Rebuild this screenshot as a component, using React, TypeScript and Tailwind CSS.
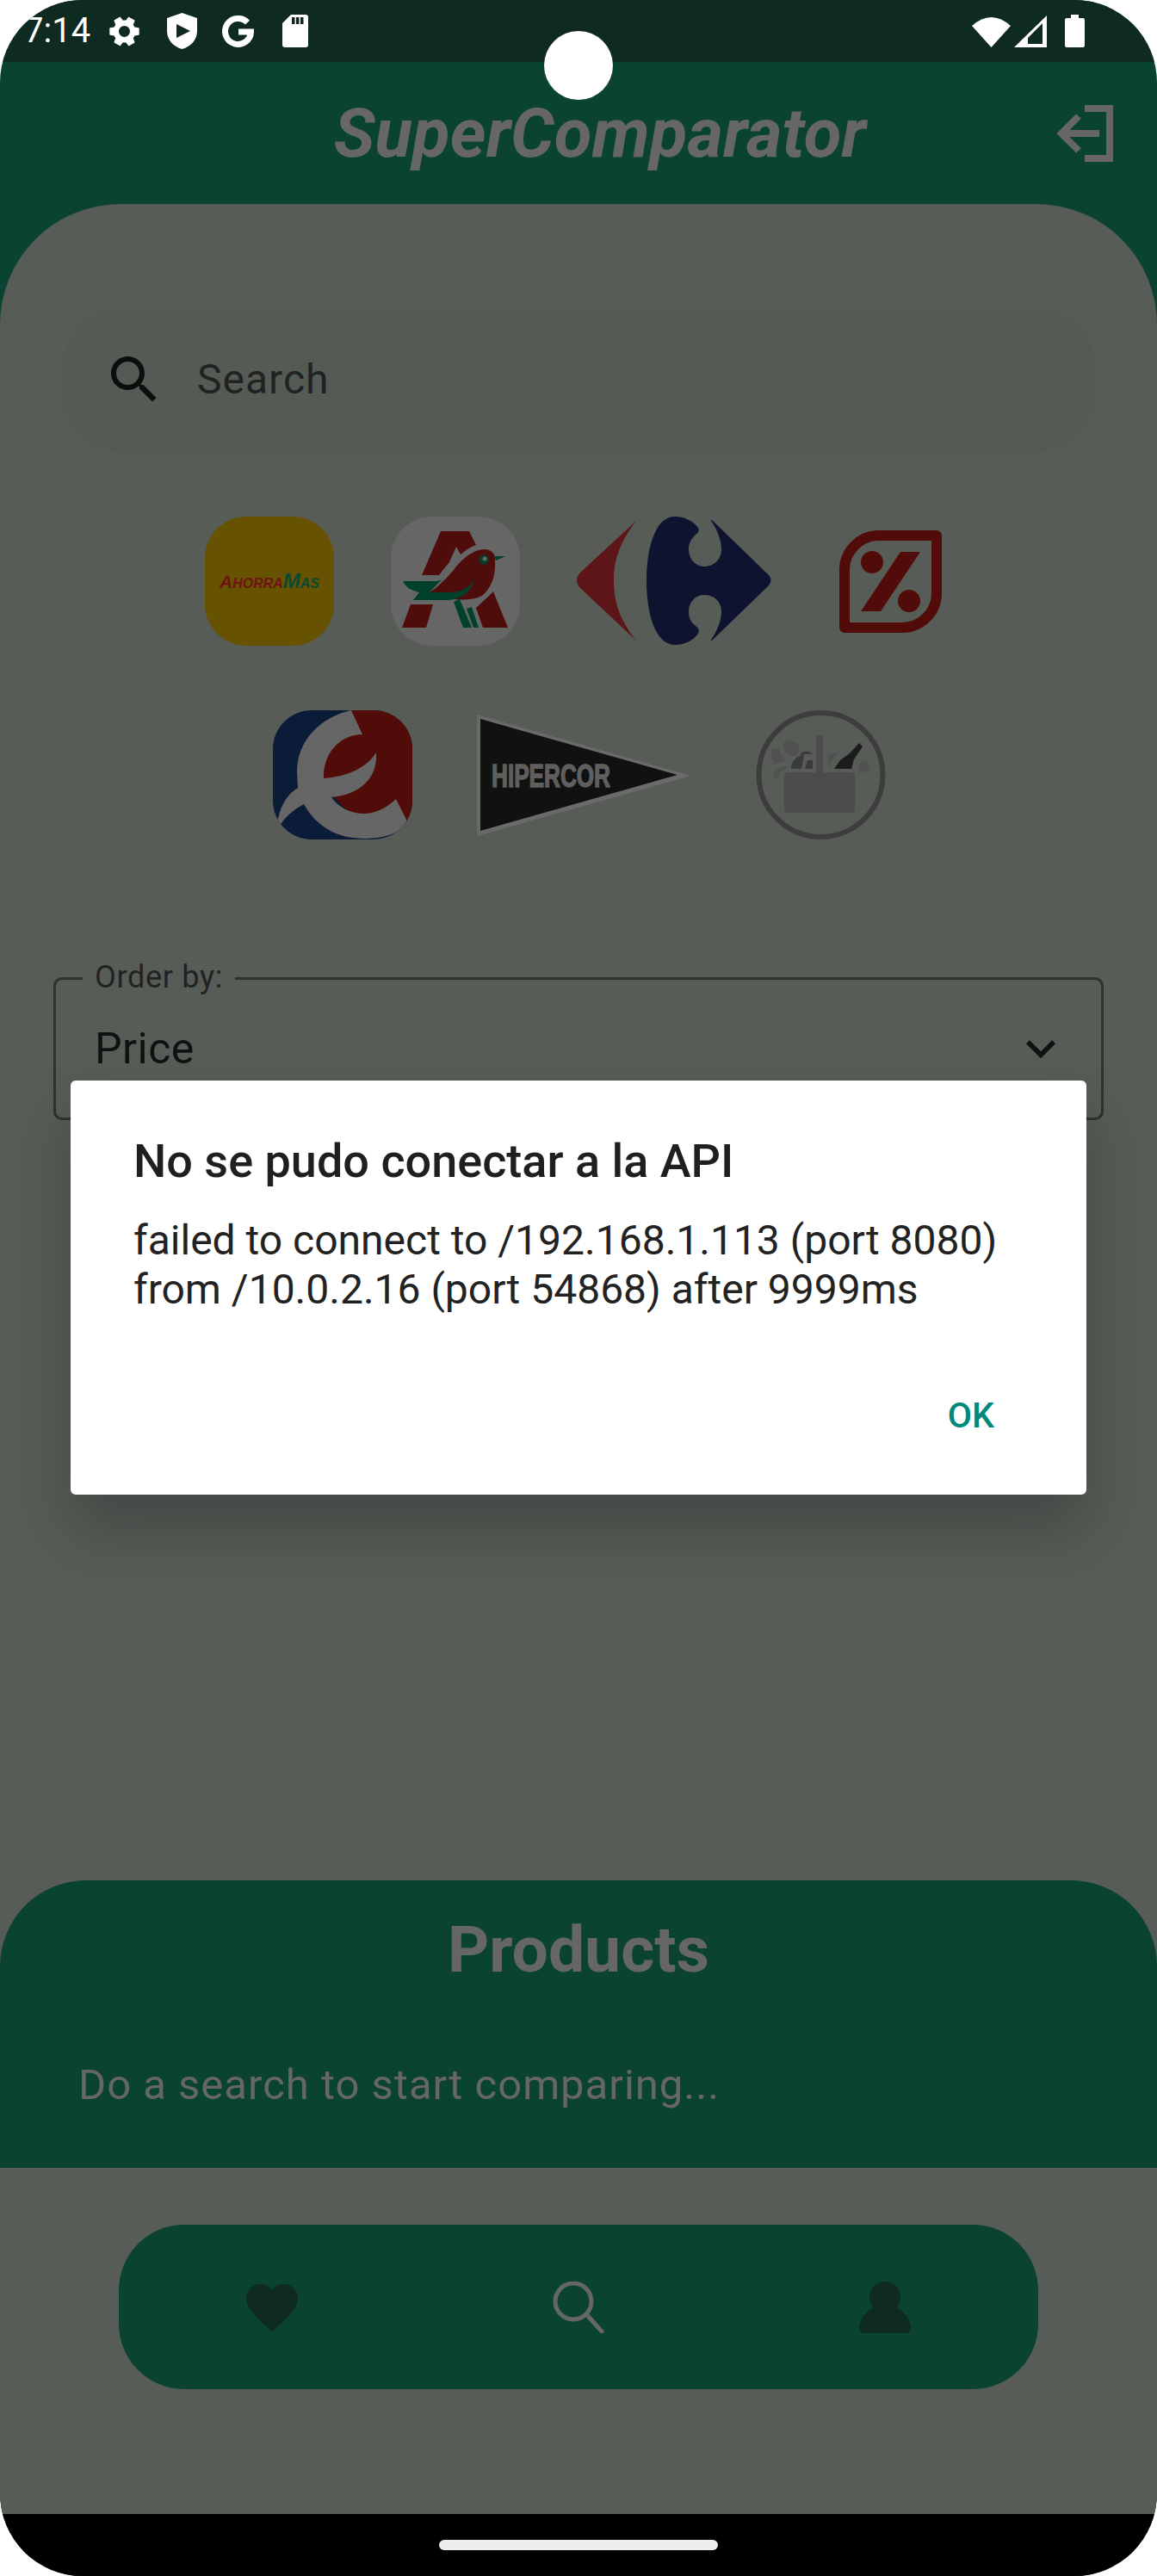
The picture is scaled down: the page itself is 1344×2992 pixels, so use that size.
const font = "font-['Roboto',sans-serif]";

const StatusIcons = () => (
  <div className="flex h-[72px] shrink-0 items-center bg-[#0f2a20] text-white">
    <span className={`ml-[28px] w-[78px] text-[40px] leading-none ${font}`}>7:14</span>
    <svg viewBox="0 0 24 24" className="ml-[17px] h-[43px] w-[43px] rotate-90" fill="white">
      <path d="M19.14 12.94c.04-.3.06-.61.06-.94 0-.32-.02-.64-.07-.94l2.03-1.58c.18-.14.23-.41.12-.61l-1.92-3.32c-.12-.22-.37-.29-.59-.22l-2.39.96c-.5-.38-1.03-.7-1.62-.94l-.36-2.54c-.04-.24-.24-.41-.48-.41h-3.84c-.24 0-.43.17-.47.41l-.36 2.54c-.59.24-1.13.57-1.62.94l-2.39-.96c-.22-.08-.47 0-.59.22L2.74 8.87c-.12.21-.08.47.12.61l2.03 1.58c-.05.3-.09.63-.09.94s.02.64.07.94l-2.03 1.58c-.18.14-.23.41-.12.61l1.92 3.32c.12.22.37.29.59.22l2.39-.96c.5.38 1.03.7 1.62.94l.36 2.54c.05.24.24.41.48.41h3.84c.24 0 .44-.17.47-.41l.36-2.54c.59-.24 1.13-.56 1.62-.94l2.39.96c.22.08.47 0 .59-.22l1.92-3.32c.12-.22.07-.47-.12-.61l-2.01-1.58zM12 15.6c-1.98 0-3.6-1.62-3.6-3.6s1.62-3.6 3.6-3.6 3.6 1.62 3.6 3.6-1.62 3.6-3.6 3.6z" />
    </svg>
    <svg viewBox="0 0 35 42" className="ml-[28px] h-[42px] w-[35px]" fill="white" fillRule="evenodd">
      <path d="M17.5 0 L35 6 V21 C35 31 28 39 17.5 42 C7 39 0 31 0 21 V6 Z M11 13 L27 21 L11 29 Z" />
    </svg>
    <svg viewBox="0 0 37 37" className="ml-[29px] h-[37px] w-[37px]" fill="none" stroke="white" strokeWidth="7">
      <path d="M29.5 8.2 A15 15 0 1 0 33.5 19 H19" />
    </svg>
    <svg viewBox="0 0 30 38" className="ml-[33px] h-[38px] w-[30px]" fill="white" fillRule="evenodd">
      <path d="M10 0 H27 Q30 0 30 3 V35 Q30 38 27 38 H3 Q0 38 0 35 V10 Z M11 3 V11 H14.5 V3 Z M16 3 V11 H19.5 V3 Z M21 3 V11 H24.5 V3 Z" />
    </svg>
    <svg viewBox="0 0 45 37" className="ml-[771px] h-[37px] w-[45px]" fill="white">
      <path d="M0 12 Q22.5 -8 45 12 L22.5 37 Z" />
    </svg>
    <svg viewBox="0 0 38 37" className="ml-[4px] h-[37px] w-[38px]" fill="white" fillRule="evenodd">
      <path d="M38 0 V37 H0 Z M16 26 V33 H33 V9 Z" />
    </svg>
    <svg viewBox="0 0 23 38" className="ml-[21px] h-[38px] w-[23px]" fill="white">
      <path d="M7 0 H16 V4 H21 Q23 4 23 6 V36 Q23 38 21 38 H2 Q0 38 0 36 V6 Q0 4 2 4 H7 Z" />
    </svg>
  </div>
);

const AhorraMas = () => (
  <div className="flex h-[150px] w-[150px] shrink-0 items-center justify-center rounded-[48px] bg-[#665200] font-['Liberation_Sans',sans-serif] text-[16px] font-bold italic leading-none">
    <span className="text-[#6e1212]">
      <span className="text-[21px]">A</span>HORRA
    </span>
    <span className="text-[#0a4a33]">
      <span className="text-[24px]">M</span>AS
    </span>
  </div>
);

const Auchan = () => (
  <div className="h-[150px] w-[150px] shrink-0 rounded-[48px] bg-[#666666]">
    <svg viewBox="0 0 150 150" className="h-full w-full">
      <g fill="#4e0c0a">
        <path d="M58 17 H91 L99 33 Q90 36 81 44 L76 35 L68 53 Q62 60 56 68 H36 Z" />
        <path d="M23 102 H49 L41 129 H13 Z" />
        <path d="M119 87 L136 129 H107 L99 106 L113 93 Z" />
        <path d="M45 88 Q60 78 73 62 C82 50 95 38 109 38 C117 38 122 44 121 51 C122 66 118 82 106 92 C96 97 84 97 73 96 Z" />
      </g>
      <g fill="#01402b">
        <path d="M14 75 H53 Q60 74 62 70 L45 88 H66 C78 88 90 85 98 73 C94 85 84 96 66 97 H26 L33 88 C24 86 17 82 14 75 Z" />
        <path d="M133 46 L120 46 L122 51 Z" />
        <path d="M73 99 L80 96 L94 129 H84 Z" />
        <path d="M88 107 L94 105 L102 129 H96 Z" />
        <circle cx="108" cy="50" r="5.5" />
      </g>
      <circle cx="109" cy="49" r="2.5" fill="#666666" />
    </svg>
  </div>
);

const Carrefour = () => (
  <svg viewBox="0 0 226 150" className="h-[150px] w-[226px] shrink-0">
    <path fill="#5e1518" d="M69 5 C50 30 43 50 43 74 C43 100 50 120 69 144 L3 82 Q-3 74 3 66 Z" />
    <path
      fill="#0e1330"
      d="M114 0 C126 0 136 6 141 13 C143 17 141 19 137 22 C132 27 130 32 130 38 C130 49 138 58 148 58 C160 58 168 49 168 38 C168 27 163 15 156 5 Q156 3 158 5 L223 68 Q228 74 223 80 L158 143 Q156 145 156 143 C163 133 168 121 168 110 C168 99 160 91 148 91 C138 91 130 99 130 110 C130 117 132 122 137 126 C141 129 143 132 141 136 C136 143 126 149 114 149 C92 149 81 115 81 74 C81 34 92 0 114 0 Z"
    />
  </svg>
);

const Dia = () => (
  <div className="flex h-[150px] w-[119px] shrink-0 items-center ml-[13px]">
    <svg viewBox="0 0 119 119" className="h-[119px] w-[119px]">
      <path
        d="M46 6 H113 V73 A40 40 0 0 1 73 113 H6 V46 A40 40 0 0 1 46 6 Z"
        fill="none"
        stroke="#510b08"
        strokeWidth="12"
        strokeLinejoin="round"
      />
      <g fill="#510b08">
        <circle cx="38" cy="37" r="13" />
        <circle cx="81" cy="82" r="13" />
        <path d="M71 25 H94 L48 94 H25 Z" />
      </g>
    </svg>
  </div>
);

const Eroski = () => (
  <div className="h-[150px] w-[162px] shrink-0 overflow-hidden rounded-[45px] bg-[#0a1c38]">
    <svg viewBox="0 0 162 150" className="h-full w-full">
      <path fill="#510b08" d="M91 0 H162 V125 L157 131 L100 130 L60 90 L50 50 Z" />
      <path
        fill="#666666"
        d="M91 0 C55 8 28 35 28 72 L29 90 C15 98 7 115 5 132 L7 135 Q18 118 36 109 C50 135 75 149 106 149 C125 149 145 145 157 131 L143 103 C130 115 118 120 106 120 C90 120 75 112 68 101 C100 98 122 80 120 49 C108 68 85 77 59 79 C58 50 78 28 104 28 Z"
      />
    </svg>
  </div>
);

const Hipercor = () => (
  <div className="flex h-[150px] w-[249px] shrink-0 items-center">
    <svg viewBox="0 0 249 141" className="h-[141px] w-[249px]">
      <path fill="#6a6a6a" d="M0 0 L249 71 L0 141 Z" />
      <path fill="#111111" d="M4 5 L233 70 L4 135 Z" />
      <text
        x="17"
        y="84"
        fill="#5f5f5f"
        stroke="#5f5f5f"
        strokeWidth="1.5"
        fontFamily="'Liberation Sans', sans-serif"
        fontWeight="700"
        fontSize="37"
        textLength="138"
        lengthAdjust="spacingAndGlyphs"
      >
        HIPERCOR
      </text>
    </svg>
  </div>
);

const Basket = () => (
  <svg viewBox="0 0 151 150" className="h-[150px] w-[151px] shrink-0">
    <circle cx="75.5" cy="75" r="72" fill="none" stroke="#3d3d3d" strokeWidth="6" />
    <g fill="#4c4c4c">
      <rect x="33" y="72" width="82" height="47" rx="4" />
      <rect x="70" y="28" width="8" height="50" rx="4" />
    </g>
    <g fill="#515151">
      <path d="M31 38 L40 35 L50 40 L51 48 L45 53 L38 52 L33 47 Z" />
      <path d="M18 46 L27 44 L29 52 L36 58 L30 60 L22 62 L18 56 Z" />
      <path d="M20 78 C20 70 30 64 38 65 L33 69 C28 71 26 76 25 79 Z" />
      <path d="M84 52 L99 47 L92 53 C88 58 86 62 86 68 Q82 60 84 52 Z" />
      <path d="M122 60 L130 58 L132 67 L126 73 L119 68 Z" />
    </g>
    <path fill="#3a3a3a" d="M41 68 C41 58 48 53 56 52 L53 68 Z M57 68 L60 58 L66 58 V68 Z M52 50 C56 47 62 47 66 51 Q58 50 52 53 Z" />
    <path fill="#1c1c1c" d="M120 38 L124 42 L114 57 L111 68 H91 L98 58 L109 50 Z" />
  </svg>
);

const Logos = () => (
  <>
    <div className="mt-[75px] flex gap-[66px] pl-[238px]">
      <AhorraMas />
      <Auchan />
      <Carrefour />
      <Dia />
    </div>
    <div className="mt-[75px] flex gap-[75px] pl-[317px]">
      <Eroski />
      <Hipercor />
      <Basket />
    </div>
  </>
);

const Nav = () => (
  <div className="mx-[138px] mt-[66px] grid h-[191px] grid-cols-3 items-center justify-items-center rounded-[76px] bg-[#0a4332]">
    <svg viewBox="0 0 24 24" className="h-[72px] w-[72px]" fill="#0f2a20">
      <path d="M12 21.35l-1.45-1.32C5.4 15.36 2 12.28 2 8.5 2 5.42 4.42 3 7.5 3c1.74 0 3.41.81 4.5 2.09C13.09 3.81 14.76 3 16.5 3 19.58 3 22 5.42 22 8.5c0 3.78-3.4 6.86-8.55 11.54L12 21.35z" />
    </svg>
    <svg viewBox="0 0 60 60" className="h-[60px] w-[60px]" fill="none" stroke="#666666" strokeWidth="5" strokeLinecap="round">
      <circle cx="24" cy="23" r="21" />
      <path d="M40 39 L57 58" />
    </svg>
    <svg viewBox="0 0 60 60" className="h-[60px] w-[60px]" fill="#0f2a20">
      <circle cx="30" cy="18" r="18" />
      <path d="M30 26 C44 26 60 40 60 54 Q60 60 54 60 H6 Q0 60 0 54 C0 40 16 26 30 26 Z" />
    </svg>
  </div>
);

export default function App() {
  return (
    <div className="h-[2992px] w-[1344px] bg-white">
      <div className={`relative flex h-[2992px] w-[1344px] flex-col overflow-hidden rounded-[96px] bg-[#0a4332] ${font}`}>
        <StatusIcons />

        <div className="flex h-[165px] shrink-0 items-center justify-end pr-[51px]">
          <span className="mr-[221px] text-[80px] font-bold italic leading-none text-[#666666]">SuperComparator</span>
          <svg viewBox="0 0 66 66" className="h-[66px] w-[66px]" fill="none" stroke="#666666" strokeWidth="8">
            <path d="M33 4 H62 V62 H33" />
            <path d="M50 33 H6" />
            <path d="M26 13 L6 33 L26 53" />
          </svg>
        </div>

        <div className="flex flex-1 flex-col rounded-t-[140px] bg-[#575c57] pt-[120px]">
          <div className="mx-[72px] flex h-[168px] items-center rounded-[70px] bg-[#555a55] pl-[48px]">
            <svg viewBox="0 0 24 24" className="h-[72px] w-[72px]" fill="#0a0f0d">
              <path d="M15.5 14h-.79l-.28-.27C15.41 12.59 16 11.11 16 9.5 16 5.91 13.09 3 9.5 3S3 5.91 3 9.5 5.91 16 9.5 16c1.61 0 3.09-.59 4.23-1.57l.27.28v.79l5 4.99L20.49 19l-4.99-5zm-6 0C7.01 14 5 11.99 5 9.5S7.01 5 9.5 5 14 7.01 14 9.5 11.99 14 9.5 14z" />
            </svg>
            <span className="ml-[37px] text-[48px] leading-none tracking-[1px] text-[#202322]">Search</span>
          </div>

          <Logos />

          <div className="relative mx-[62px] mt-[160px] flex h-[166px] items-center justify-between rounded-[10px] border-[3px] border-[#2f322f] pl-[45px] pr-[36px]">
            <span className="absolute left-[31px] top-[-23px] bg-[#575c57] px-[14px] text-[36px] leading-[40px] tracking-[0.7px] text-[#202322]">
              Order by:
            </span>
            <span className="text-[50px] leading-none tracking-[0.5px] text-[#0f1211]">Price</span>
            <svg viewBox="0 0 24 24" className="h-[68px] w-[68px]" fill="#0f1211">
              <path d="M16.59 8.59L12 13.17 7.41 8.59 6 10l6 6 6-6z" />
            </svg>
          </div>

          <div className="mt-auto flex h-[334px] flex-col rounded-t-[100px] bg-[#0a4332]">
            <div className="pt-[38px] text-center text-[75px] font-bold leading-[84px] text-[#666666]">Products</div>
            <div className="pl-[91px] pt-[88px] text-[49px] leading-[56px] tracking-[1px] text-[#666666]">
              Do a search to start comparing...
            </div>
          </div>

          <Nav />

          <div className="h-[145px] shrink-0" />
        </div>

        <div className="flex h-[72px] shrink-0 items-center justify-center bg-black">
          <div className="h-[12px] w-[324px] rounded-full bg-[#eeeeee]" />
        </div>

        <div className="absolute left-[632px] top-[36px] h-[80px] w-[80px] rounded-full bg-white" />

        <div className="absolute left-[82px] top-[1255px] flex h-[481px] w-[1180px] flex-col rounded-[6px] bg-white pl-[73px] shadow-[0_40px_70px_rgba(0,0,0,0.22)]">
          <div className="pt-[66px] text-[54px] font-medium leading-[56px] text-[#1f1f1f]">No se pudo conectar a la API</div>
          <div className="mt-[35px] text-[48px] leading-[57px] text-[#222222]">
            failed to connect to /192.168.1.113 (port 8080)
            <br />
            from /10.0.2.16 (port 54868) after 9999ms
          </div>
          <div className="mt-auto self-end pb-[69px] pr-[107px] text-[41px] font-medium leading-[46px] text-[#00897b]">OK</div>
        </div>
      </div>
    </div>
  );
}
